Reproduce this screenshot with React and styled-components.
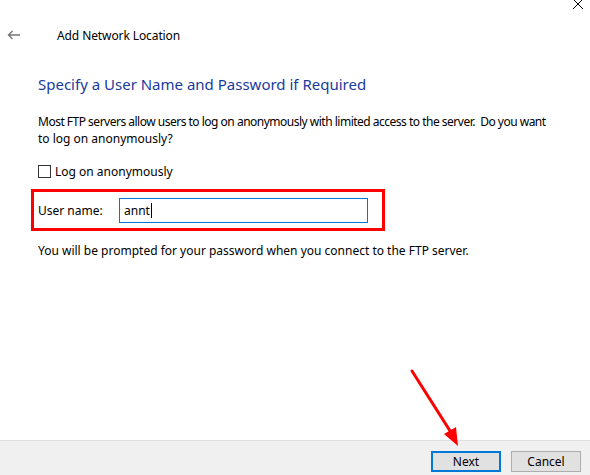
import React from 'react';
import styled, { createGlobalStyle } from 'styled-components';

const GlobalStyle = createGlobalStyle`
  html, body {
    margin: 0;
    padding: 0;
    background: #ffffff;
  }
  body {
    font-family: "Noto Sans", "Open Sans", sans-serif;
    font-size: 12px;
    color: #000000;
  }
`;

const Window = styled.div`
  position: relative;
  width: 590px;
  height: 475px;
  display: flex;
  flex-direction: column;
  background: #ffffff;
  overflow: hidden;
`;

const CaptionRow = styled.div`
  height: 14px;
  display: flex;
  justify-content: flex-end;
  padding-right: 6px;
`;

const CloseGlyph = styled.svg`
  margin-top: -2px;
`;

const HeaderRow = styled.div`
  height: 42px;
  display: flex;
  align-items: center;
`;

const BackButton = styled.div`
  width: 50px;
  padding-left: 7px;
  display: flex;
  align-items: center;
`;

const WindowTitle = styled.span`
  font-size: 12px;
  letter-spacing: -0.1px;
  color: #000;
`;

const Content = styled.div`
  flex: 1;
  padding: 18px 0 0 38px;
  display: flex;
  flex-direction: column;
`;

const Heading = styled.h1`
  margin: 0;
  font-size: 15px;
  font-weight: 400;
  line-height: 21px;
  color: #1a3a9e;
`;

const Paragraph = styled.p`
  margin: ${({ $top }) => $top || 0}px 0 0 0;
  font-size: 12px;
  line-height: 17px;
`;

const Line = styled.span`
  display: block;
  white-space: nowrap;
  letter-spacing: ${({ $tight }) => ($tight ? '-0.5px' : '0')};
`;

const CheckRow = styled.label`
  margin-top: 16px;
  display: flex;
  align-items: center;
  gap: 4px;
  line-height: 17px;
`;

const CheckBox = styled.span`
  width: 11px;
  height: 11px;
  border: 1px solid #333333;
  background: #fff;
`;

const Highlight = styled.div`
  margin: 9px 0 0 -7px;
  width: 344px;
  height: 36px;
  border: 3px solid #ff0000;
  display: flex;
  align-items: center;
  padding-left: 4px;
`;

const FieldLabel = styled.span`
  width: 81px;
`;

const TextInput = styled.div`
  width: 249px;
  height: 25px;
  border: 1px solid #0078d7;
  display: flex;
  align-items: center;
  padding-left: 4px;
  box-sizing: border-box;
`;

const Caret = styled.span`
  display: inline-block;
  width: 1px;
  height: 15px;
  background: #000;
  margin-left: 1px;
`;

const Footer = styled.div`
  height: 35px;
  box-sizing: border-box;
  border-top: 1px solid #dfdfdf;
  background: #f0f0f0;
  display: flex;
  justify-content: flex-end;
  align-items: flex-start;
  gap: 10px;
  padding: 10px 9px 0 0;
`;

const Button = styled.button`
  width: 70px;
  height: 21px;
  box-sizing: border-box;
  font-family: inherit;
  font-size: 12px;
  color: #000;
  background: #e1e1e1;
  border: ${({ $primary }) => ($primary ? '2px solid #0078d7' : '1px solid #adadad')};
  padding: 0;
`;

const ArrowOverlay = styled.svg`
  position: absolute;
  left: 0;
  top: 0;
  pointer-events: none;
`;

const App = () => {
  return (
    <Window>
      <GlobalStyle />
      <CaptionRow>
        <CloseGlyph width="12" height="12" viewBox="0 0 12 12">
          <path d="M1 1 L11 11 M11 1 L1 11" stroke="#000" strokeWidth="1" fill="none" />
        </CloseGlyph>
      </CaptionRow>
      <HeaderRow>
        <BackButton>
          <svg width="14" height="10" viewBox="0 0 14 10">
            <path d="M13 5 H1.5 M5.5 1 L1.5 5 L5.5 9" stroke="#767676" strokeWidth="1.4" fill="none" />
          </svg>
        </BackButton>
        <WindowTitle>Add Network Location</WindowTitle>
      </HeaderRow>
      <Content>
        <Heading>Specify a User Name and Password if Required</Heading>
        <Paragraph $top={18}>
          <Line $tight>Most FTP servers allow users to log on anonymously with limited access to the server.&nbsp; Do you want</Line>
          <Line>to log on anonymously?</Line>
        </Paragraph>
        <CheckRow>
          <CheckBox />
          Log on anonymously
        </CheckRow>
        <Highlight>
          <FieldLabel>User name:</FieldLabel>
          <TextInput>
            annt<Caret />
          </TextInput>
        </Highlight>
        <Paragraph $top={11}>
          You will be prompted for your password when you connect to the FTP server.
        </Paragraph>
      </Content>
      <Footer>
        <Button $primary>Next</Button>
        <Button>Cancel</Button>
      </Footer>
      <ArrowOverlay width="590" height="475" viewBox="0 0 590 475">
        <line x1="412" y1="371" x2="452" y2="434" stroke="#ff0000" strokeWidth="3" strokeLinecap="round" />
        <polygon points="458,446 444,434 456,427" fill="#ff0000" />
      </ArrowOverlay>
    </Window>
  );
};

export default App;
